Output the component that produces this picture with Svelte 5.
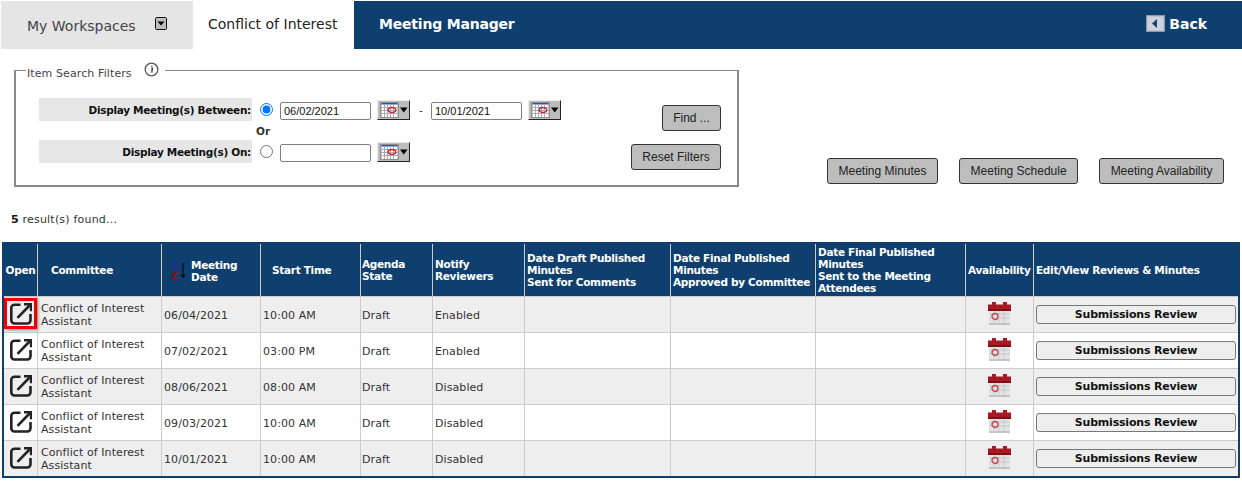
<script>
  const rows = [
    { date: '06/04/2021', time: '10:00 AM', notify: 'Enabled', marked: true },
    { date: '07/02/2021', time: '03:00 PM', notify: 'Enabled' },
    { date: '08/06/2021', time: '08:00 AM', notify: 'Disabled' },
    { date: '09/03/2021', time: '10:00 AM', notify: 'Disabled' },
    { date: '10/01/2021', time: '10:00 AM', notify: 'Disabled' }
  ];
</script>

{#snippet calButton()}
  <button class="calbtn" type="button" aria-label="Choose date">
    <svg width="30" height="18" viewBox="0 0 30 18">
      <rect x="1" y="1" width="19" height="16" fill="#8f8f8f" />
      <rect x="2.500" y="2" width="16" height="14" fill="#fff" />
      <rect x="2.500" y="2" width="16" height="1.500" fill="#2a55b0" />
      <path d="M2.500 6.500h16M2.500 9.500h16M2.500 12.500h16M5.500 3.500v12.500M8.500 3.500v12.500M11.500 3.500v12.500M14.500 3.500v12.500" stroke="#a8a8b4" stroke-width="1" fill="none" />
      <ellipse cx="13" cy="9" rx="3.800" ry="2.400" fill="none" stroke="#c8101c" stroke-width="1.200" />
      <path d="M21 6.500h7.500L24.750 11.500z" fill="#000" />
    </svg>
  </button>
{/snippet}

<div class="page">
  <nav class="nav">
    <div class="tab-work">
      <span>My Workspaces</span>
      <span class="drop"><svg width="12" height="13" viewBox="0 0 12 13"><rect x="0.500" y="0.500" width="11" height="12" rx="1" fill="#bdbdbd" stroke="#111" /><path d="M2.500 4.500h7l-3.500 4z" fill="#000" /></svg></span>
    </div>
    <div class="tab-active">Conflict of Interest</div>
    <div class="tab-title">Meeting Manager</div>
    <div class="back">
      <svg width="19" height="17" viewBox="0 0 19 17"><rect x="0.500" y="0.500" width="18" height="16" fill="#b9c3d4" stroke="#8d99ae" /><rect x="2" y="2" width="15" height="13" fill="#ccd3e0" /><path d="M11 4v9L6 8.500z" fill="#1f3f6a" /></svg>
      <span>Back</span>
    </div>
  </nav>

  <div class="filters">
    <fieldset class="box">
      <legend class="legend">
        <span>Item Search Filters</span>
        <svg class="info" width="15" height="15" viewBox="0 0 15 15"><circle cx="7.500" cy="7.500" r="6.300" fill="#fff" stroke="#555" stroke-width="1.300" /><path d="M7.300 6.500h1.200l-.8 4.200M7.200 4.300h1.300" stroke="#333" stroke-width="1.300" fill="none" /></svg>
      </legend>
      <div class="form">
        <div class="lbl">Display Meeting(s) Between:</div>
        <div class="radio"><input type="radio" name="m" checked /></div>
        <input class="date" type="text" value="06/02/2021" />
        <div class="cal">{@render calButton()}</div>
        <div class="dash">-</div>
        <input class="date" type="text" value="10/01/2021" />
        <div class="cal">{@render calButton()}</div>
        <div class="actions">
          <button class="gbtn find" type="button">Find ...</button>
          <button class="gbtn reset" type="button">Reset Filters</button>
        </div>
        <div class="or">Or</div>
        <div class="lbl">Display Meeting(s) On:</div>
        <div class="radio"><input type="radio" name="m" /></div>
        <input class="date" type="text" value="" />
        <div class="cal">{@render calButton()}</div>
      </div>
    </fieldset>
    <div class="side">
      <button class="gbtn" type="button">Meeting Minutes</button>
      <button class="gbtn" type="button">Meeting Schedule</button>
      <button class="gbtn" type="button">Meeting Availability</button>
    </div>
  </div>

  <p class="count"><b>5</b> result(s) found...</p>

  <table class="grid">
    <colgroup>
      <col class="c1" /><col class="c2" /><col class="c3" /><col class="c4" /><col class="c5" /><col class="c6" /><col class="c7" /><col class="c8" /><col class="c9" /><col class="c10" /><col class="c11" />
    </colgroup>
    <thead>
      <tr>
        <th class="center">Open</th>
        <th class="pad13">Committee</th>
        <th>
          <div class="sort">
            <svg width="17" height="18" viewBox="0 0 17 18">
              <text x="0" y="8" class="az a">A</text>
              <text x="0" y="17" class="az z">Z</text>
              <path d="M12 1v13" stroke="#000" stroke-width="1" />
              <path d="M9.500 12.500h5L12 16.500z" fill="#000" />
            </svg>
            <span>Meeting<br />Date</span>
          </div>
        </th>
        <th class="pad11">Start Time</th>
        <th class="tight">Agenda<br />State</th>
        <th>Notify<br />Reviewers</th>
        <th>Date Draft Published<br />Minutes<br />Sent for Comments</th>
        <th>Date Final Published<br />Minutes<br />Approved by Committee</th>
        <th>Date Final Published<br />Minutes<br />Sent to the Meeting<br />Attendees</th>
        <th>Availability</th>
        <th>Edit/View Reviews &amp; Minutes</th>
      </tr>
    </thead>
    <tbody>
      {#each rows as r}
        <tr>
          <td class="open">
            <div class="open-wrap" class:marked={r.marked}>
              <svg width="22" height="22" viewBox="0 0 22 22">
                <path d="M10.500 1.700H4.500a3.200 3.200 0 0 0-3.200 3.200v12.400a3.200 3.200 0 0 0 3.200 3.200h12.800a3.200 3.200 0 0 0 3.200-3.200V11" fill="none" stroke="#222" stroke-width="2.600" />
                <path d="M7.500 14.800 20 2" stroke="#222" stroke-width="2.600" fill="none" />
                <path d="M14 1.200h7v7" stroke="#222" stroke-width="2.400" fill="none" />
              </svg>
            </div>
          </td>
          <td class="cm">Conflict of Interest<br />Assistant</td>
          <td class="cell">{r.date}</td>
          <td class="cell">{r.time}</td>
          <td class="cell tight">Draft</td>
          <td class="cell">{r.notify}</td>
          <td></td>
          <td></td>
          <td></td>
          <td class="center">
            <svg class="calicon" width="23" height="23" viewBox="0 0 23 23">
              <rect x="1" y="8" width="21" height="13" fill="#e4e4e4" />
              <path d="M1 12h21M1 16h21M6 8v13M11 8v13M16 8v13" stroke="#c4c8cc" stroke-width="1" />
              <path d="M0 9V2.500h4V0h4v2.500h7V0h4v2.500h4V9z" fill="#a81822" />
              <rect x="0" y="7" width="23" height="2" fill="#7e1118" />
              <circle cx="7" cy="14.500" r="3" fill="none" stroke="#c4444c" stroke-width="1.300" />
              <rect x="1" y="21" width="21" height="2" fill="#c4c4c4" />
            </svg>
          </td>
          <td class="act"><button class="subm" type="button">Submissions Review</button></td>
        </tr>
      {/each}
    </tbody>
  </table>
</div>

<style>
  :global(body) {
    margin: 0;
    background: #fff;
    font-family: "DejaVu Sans", Verdana, sans-serif;
    font-size: 11px;
    color: #333;
  }
  .page {
    width: 1242px;
    height: 487px;
    padding-top: 1px;
    box-sizing: border-box;
    overflow: hidden;
  }
  .nav {
    display: flex;
    height: 48px;
    margin-left: 1px;
    background: #0f3f6f;
    font-size: 14px;
  }
  .tab-work {
    width: 192px;
    box-sizing: border-box;
    padding: 17px 0 0 26px;
    background: #e5e5e5;
    color: #444;
    display: flex;
    align-items: flex-start;
  }
  .drop {
    margin: -1px 0 0 19px;
    line-height: 0;
  }
  .tab-active {
    width: 161px;
    box-sizing: border-box;
    padding: 15px 0 0 15px;
    background: #fff;
    color: #222;
  }
  .tab-title {
    padding: 15px 0 0 25px;
    font-weight: bold;
    letter-spacing: -0.2px;
    color: #fff;
    flex: 1;
  }
  .back {
    display: flex;
    align-items: flex-start;
    gap: 4px;
    padding: 14px 35px 0 0;
    font-weight: bold;
    color: #fff;
  }
  .back span {
    padding-top: 1px;
  }
  .filters {
    display: flex;
    align-items: flex-end;
    margin: 12px 0 0 14px;
  }
  .box {
    width: 725px;
    box-sizing: border-box;
    margin: 0;
    padding: 0 16px 22px 23px;
    border: 2px solid #888;
    border-width: 1.5px 2px 2px 2px;
    min-width: 0;
  }
  .legend {
    display: flex;
    align-items: center;
    height: 18px;
    margin-left: -13px;
    padding: 0 6px 0 1px;
    color: #444;
    letter-spacing: 0.1px;
  }
  .legend span {
    padding-top: 6px;
  }
  .info {
    margin: -1px 0 0 12px;
  }
  .form {
    display: grid;
    grid-template-columns: 213px 28px 91px 39px 21px 91px 39px 1fr;
    grid-template-rows: 23px 19px 23px;
    margin-top: 19px;
    align-items: start;
  }
  .lbl {
    height: 23px;
    line-height: 25px;
    text-align: right;
    background: #e6e6e6;
    font-weight: bold;
    font-size: 10.500px;
    letter-spacing: -0.3px;
    color: #111;
    padding-right: 1px;
    box-sizing: border-box;
    grid-column: 1;
  }
  .radio {
    padding: 5px 0 0 8px;
    line-height: 0;
  }
  .radio input {
    margin: 0;
    width: 13px;
    height: 13px;
    accent-color: #0075ff;
  }
  .date {
    width: 91px;
    height: 18px;
    margin-top: 4px;
    box-sizing: border-box;
    padding: 0 3px;
    border: 1px solid #808080;
    border-radius: 2px;
    font: 11px "Liberation Sans", Arial, sans-serif;
    color: #111;
    background: #fff;
  }
  .cal {
    padding: 2px 0 0 6px;
  }
  .calbtn {
    display: block;
    width: 33px;
    height: 20px;
    padding: 0 0 0 1px;
    line-height: 0;
    background: #bcbcbc;
    border: 1px solid;
    border-color: #eee #222 #222 #eee;
    box-sizing: border-box;
  }
  .calbtn svg {
    display: block;
  }
  .dash {
    padding: 4px 0 0 9px;
    line-height: 16px;
    font-family: "Liberation Sans", Arial, sans-serif;
  }
  .or {
    grid-column: 1 / 3;
    grid-row: 2;
    padding: 4px 0 0 217px;
    font-weight: bold;
    font-size: 10.500px;
    line-height: 13px;
    color: #333;
  }
  .actions {
    grid-column: 8;
    grid-row: 1 / 4;
    display: flex;
    flex-direction: column;
    align-items: flex-end;
    gap: 13px;
    margin-top: 7px;
  }
  .gbtn {
    height: 26px;
    padding: 0 10.500px;
    background: #bdbdbd;
    border: 1px solid #333;
    border-radius: 3px;
    font: 12px "Liberation Sans", Arial, sans-serif;
    color: #222;
    white-space: nowrap;
  }
  .find {
    width: 59px;
    padding: 0;
  }
  .reset {
    width: 90px;
    padding: 0;
  }
  .side {
    display: flex;
    gap: 21px;
    margin: 0 0 3px 88px;
  }
  .count {
    margin: 26px 0 0 11px;
    line-height: 13px;
    letter-spacing: 0.2px;
    color: #333;
  }
  .count b {
    color: #111;
  }
  .grid {
    width: 1238px;
    margin: 16px 0 0 2px;
    table-layout: fixed;
    border-collapse: separate;
    border-spacing: 0;
    border: 2px solid #0f3f6f;
  }
  .c1 { width: 34px; }
  .c2 { width: 124px; }
  .c3 { width: 99px; }
  .c4 { width: 100px; }
  .c5 { width: 72px; }
  .c6 { width: 92px; }
  .c7 { width: 146px; }
  .c8 { width: 145px; }
  .c9 { width: 150px; }
  .c10 { width: 68px; }
  .c11 { width: 204px; }
  th {
    height: 53px;
    box-sizing: border-box;
    padding: 0 0 0 2px;
    background: #0f3f6f;
    color: #fff;
    font-weight: bold;
    font-size: 10.500px;
    letter-spacing: -0.3px;
    line-height: 12px;
    text-align: left;
    white-space: nowrap;
    border-right: 1px solid #ccc;
    border-bottom: 1px solid #ccc;
  }
  th:last-child {
    border-right: 0;
  }
  th.center {
    padding: 0;
    text-align: center;
  }
  th.tight {
    padding-left: 1px;
  }
  th.pad13 {
    padding-left: 13px;
  }
  th.pad11 {
    padding-left: 11px;
  }
  .sort {
    display: flex;
    align-items: center;
    gap: 3px;
    padding: 1px 0 0 7px;
  }
  .az {
    font: bold 10px "DejaVu Sans", sans-serif;
  }
  .a {
    fill: #2a2a9a;
  }
  .z {
    fill: #8a1010;
  }
  td {
    height: 36px;
    box-sizing: border-box;
    padding: 0 0 0 2px;
    line-height: 13px;
    letter-spacing: 0.08px;
    color: #333;
    border-right: 1px solid #ccc;
    border-bottom: 1px solid #ccc;
    background: #fff;
  }
  td.cell {
    padding-top: 1px;
  }
  td.tight {
    padding-left: 1px;
  }
  tr:nth-child(odd) td {
    background: #eee;
  }
  tr:last-child td {
    height: 35px;
    border-bottom: 0;
  }
  td:last-child {
    border-right: 0;
  }
  td.center {
    padding: 0;
    line-height: 0;
  }
  td.cm {
    padding-left: 3px;
  }
  td.open {
    padding: 0;
    position: relative;
  }
  .open-wrap {
    display: flex;
    align-items: center;
    justify-content: center;
    height: 33px;
    margin-top: -1px;
  }
  .open-wrap svg {
    display: block;
  }
  .marked::after {
    content: "";
    position: absolute;
    left: 0;
    top: 1px;
    width: 33px;
    height: 31px;
    box-sizing: border-box;
    border: 3px solid #f00000;
    box-shadow: 1px 1px 3px rgba(0, 0, 0, 0.4);
  }
  .calicon {
    display: block;
    margin: -3px auto 0;
  }
  .act {
    padding-left: 2px;
  }
  .subm {
    display: block;
    width: 200px;
    height: 19px;
    padding: 0 0 0 0;
    background: #eee;
    border: 1px solid #777;
    border-radius: 3px;
    font: bold 11px "DejaVu Sans", Verdana, sans-serif;
    letter-spacing: -0.2px;
    color: #111;
  }
</style>
